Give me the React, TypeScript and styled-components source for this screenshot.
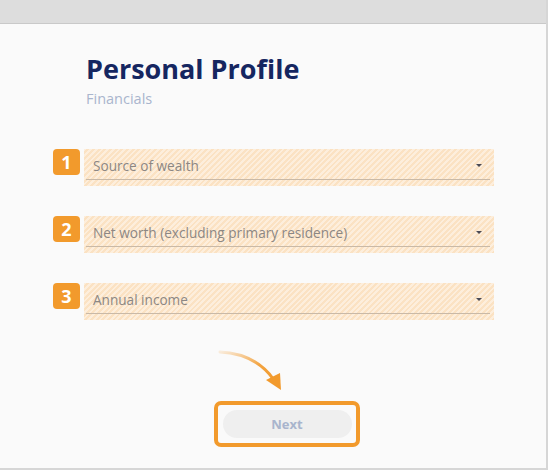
import styled, { createGlobalStyle } from "styled-components";

const GlobalStyle = createGlobalStyle`
  html, body {
    margin: 0;
    padding: 0;
    background: #ffffff;
    font-family: "Open Sans", "Noto Sans", sans-serif;
  }
`;

const Frame = styled.div`
  width: 548px;
  height: 470px;
  box-sizing: border-box;
  border-right: 2px solid #d6d6d6;
  border-bottom: 2px solid #d6d6d6;
  background: #fafafa;
  display: flex;
  flex-direction: column;
`;

const TopBar = styled.div`
  height: 23px;
  flex-shrink: 0;
  background: #dddddd;
  border-bottom: 1px solid #c9c9c9;
`;

const Header = styled.div`
  padding: 26px 0 0 86px;
`;

const Title = styled.h1`
  margin: 0;
  font-size: 27px;
  line-height: 38px;
  font-weight: 700;
  color: #152660;
`;

const Subtitle = styled.div`
  margin-top: 1px;
  font-size: 14.5px;
  line-height: 20px;
  color: #a9b5cd;
`;

const Form = styled.div`
  display: flex;
  flex-direction: column;
  gap: 30px;
  padding: 40px 0 0 53px;
`;

const Row = styled.div`
  display: flex;
  align-items: flex-start;
  gap: 4px;
`;

const Badge = styled.div`
  width: 27px;
  height: 26px;
  border-radius: 4px;
  background: #f29a2c;
  color: #ffffff;
  font-weight: 700;
  font-size: 18px;
  display: flex;
  align-items: center;
  justify-content: center;
`;

const Field = styled.div`
  width: 410px;
  height: 37px;
  box-sizing: border-box;
  padding: 0 4px 6px 2px;
  background: repeating-linear-gradient(
    -45deg,
    #fbe2c3 0px,
    #fbe2c3 2px,
    #fdeedc 2px,
    #fdeedc 4px
  );
  display: flex;
`;

const Select = styled.div`
  flex: 1;
  display: flex;
  align-items: center;
  justify-content: space-between;
  border-bottom: 1px solid #c9b9a7;
  padding: 3px 8px 0 7px;
`;

const Placeholder = styled.span`
  font-size: 13.6px;
  color: #8c8784;
`;

const Caret = styled.span`
  width: 0;
  height: 0;
  border-left: 3px solid transparent;
  border-right: 3px solid transparent;
  border-top: 3px solid #4a4a55;
`;

const Footer = styled.div`
  display: flex;
  flex-direction: column;
  align-items: center;
  padding-top: 30px;
`;

const ArrowMark = styled.svg`
  display: block;
  margin-left: -40px;
`;

const Highlight = styled.div`
  margin-top: 9px;
  margin-left: 27px;
  border: 4px solid #f29a2c;
  border-radius: 7px;
  padding: 5px 4px 5px 5px;
`;

const NextButton = styled.button`
  width: 129px;
  height: 28px;
  border: none;
  border-radius: 14px;
  background: #efefef;
  color: #a9b5cd;
  font-family: inherit;
  font-weight: 700;
  font-size: 13px;
  display: block;
`;

const fields = [
  "Source of wealth",
  "Net worth (excluding primary residence)",
  "Annual income",
];

function App() {
  return (
    <>
      <GlobalStyle />
      <Frame>
        <TopBar />
        <Header>
          <Title>Personal Profile</Title>
          <Subtitle>Financials</Subtitle>
        </Header>
        <Form>
          {fields.map((label, i) => (
            <Row key={label}>
              <Badge>{i + 1}</Badge>
              <Field>
                <Select>
                  <Placeholder>{label}</Placeholder>
                  <Caret />
                </Select>
              </Field>
            </Row>
          ))}
        </Form>
        <Footer>
          <ArrowMark width="70" height="42" viewBox="0 0 70 42">
            <defs>
              <linearGradient id="arrowFade" x1="0" y1="0" x2="1" y2="1">
                <stop offset="0" stopColor="#f29a2c" stopOpacity="0.15" />
                <stop offset="0.6" stopColor="#f29a2c" stopOpacity="0.9" />
                <stop offset="1" stopColor="#f29a2c" />
              </linearGradient>
            </defs>
            <path
              d="M2 2 C 25 3, 44 13, 56 30"
              fill="none"
              stroke="url(#arrowFade)"
              strokeWidth="3"
              strokeLinecap="round"
            />
            <path d="M48 30 L63 40 L62 23 Z" fill="#f29a2c" />
          </ArrowMark>
          <Highlight>
            <NextButton>Next</NextButton>
          </Highlight>
        </Footer>
      </Frame>
    </>
  );
}

export default App;
